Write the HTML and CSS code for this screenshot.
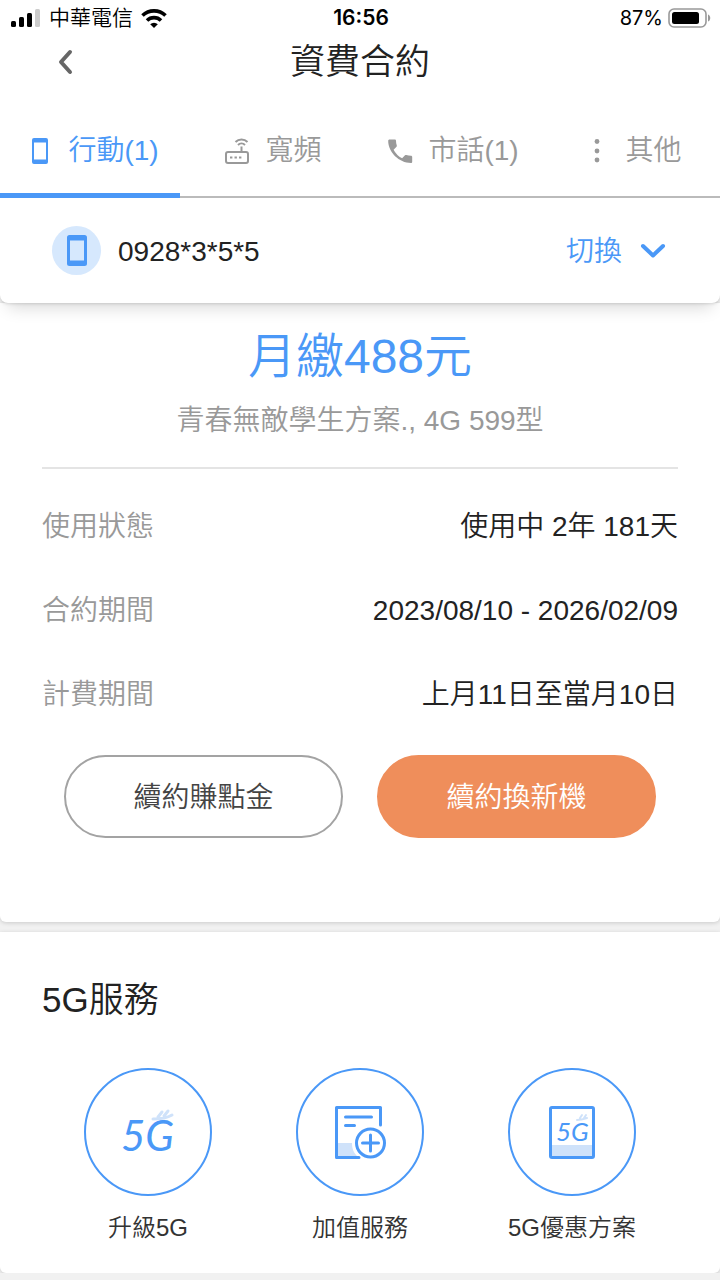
FILE: index.html
```html
<!DOCTYPE html>
<html lang="zh-Hant">

<head>
    <meta charset="UTF-8">
    <meta name="viewport" content="width=device-width, initial-scale=1.0">
    <title>資費合約</title>
    <link rel="stylesheet" href="styles.css">
</head>

<body>
    <header class="top">
        <div class="status-bar">
            <div class="status-left">
                <svg width="30" height="18" viewBox="0 0 30 18">
                    <rect x="0" y="12" width="5" height="6" rx="1.5" />
                    <rect x="8" y="8" width="5" height="10" rx="1.5" />
                    <rect x="16" y="4" width="5" height="14" rx="1.5" />
                    <rect x="24" y="0" width="5" height="18" rx="1.5" fill="#ccc" />
                </svg>
                <span>中華電信</span>
                <svg width="26" height="19" viewBox="0 0 26 19" fill="none" stroke="#000" stroke-width="3.6">
                    <path d="M1.5 6.500a16.500 16.500 0 0 1 23 0" />
                    <path d="M6 11.500a10 10 0 0 1 14 0" />
                    <path d="M13 19l-3.800-3.800a5.400 5.400 0 0 1 7.600 0z" fill="#000" stroke="none" />
                </svg>
            </div>
            <div class="status-time">16:56</div>
            <div class="status-right">
                <span>87%</span>
                <svg width="43" height="20" viewBox="0 0 43 20">
                    <rect x="1" y="1" width="37" height="18" rx="5" fill="none" stroke="#999" stroke-width="1.6" />
                    <rect x="4" y="4" width="27" height="12" rx="2.5" />
                    <path d="M40 6.500c3 1 3 6 0 7z" fill="#999" />
                </svg>
            </div>
        </div>

        <div class="title-bar">
            <button class="back" type="button" aria-label="返回">
                <svg width="16" height="26" viewBox="0 0 16 26" fill="none" stroke="#666" stroke-width="4" stroke-linecap="round" stroke-linejoin="round">
                    <path d="M12 3L3 13l9 10" />
                </svg>
            </button>
            <h1>資費合約</h1>
        </div>

        <nav class="tabs">
            <button class="tab active" type="button">
                <svg class="tab-icon" viewBox="0 0 28 28">
                    <path fill="currentColor" fill-rule="evenodd" d="M8 1h12a2 2 0 0 1 2 2v22a2 2 0 0 1-2 2H8a2 2 0 0 1-2-2V3a2 2 0 0 1 2-2zM8 5.500v17h12v-17z" />
                </svg>
                行動(1)
            </button>
            <button class="tab" type="button">
                <svg class="tab-icon" viewBox="0 0 28 28" fill="none" stroke="currentColor" stroke-width="2">
                    <rect x="3" y="15" width="22" height="11" rx="2" />
                    <path d="M18.500 15V9.500M12.500 5a8.500 8.500 0 0 1 12 0M15 8a5 5 0 0 1 7 0" />
                    <path d="M7 20.500h2.400M11.500 20.500h2.400M16 20.500h2.400" />
                </svg>
                寬頻
            </button>
            <button class="tab" type="button">
                <svg class="tab-icon" viewBox="0 0 28 28">
                    <path fill="currentColor" d="M3.500 2.500h5.200c.7 0 1.300.5 1.300 1.300 0 1.600.3 3.200.8 4.700.1.500 0 1-.3 1.300l-2.900 2.900a19.500 19.500 0 0 0 8.500 8.500l2.900-2.900c.4-.3.900-.4 1.300-.3 1.500.5 3.100.8 4.700.8.700 0 1.200.6 1.200 1.300v4.600c0 .7-.5 1.300-1.200 1.300C13 26 2.200 15.200 2.200 3.800c0-.7.600-1.300 1.300-1.300z" />
                </svg>
                市話(1)
            </button>
            <button class="tab" type="button">
                <svg class="tab-icon" viewBox="0 0 28 28" fill="currentColor">
                    <circle cx="14" cy="4.5" r="2.4" />
                    <circle cx="14" cy="14" r="2.4" />
                    <circle cx="14" cy="23" r="2.4" />
                </svg>
                其他
            </button>
        </nav>

        <div class="number-bar">
            <span class="phone-badge">
                <svg width="20" height="32" viewBox="0 0 20 32">
                    <path fill="#4a98f7" fill-rule="evenodd" d="M2.500 0h15A2.500 2.500 0 0 1 20 2.500v26a2.500 2.500 0 0 1-2.500 2.500h-15A2.500 2.500 0 0 1 0 28.500v-26A2.500 2.500 0 0 1 2.500 0zM3 5.500v20h14v-20z" />
                </svg>
            </span>
            <span class="number">0928*3*5*5</span>
            <button class="switch" type="button">
                切換
                <svg width="26" height="18" viewBox="0 0 26 18" fill="none" stroke="currentColor" stroke-width="4" stroke-linecap="round" stroke-linejoin="round">
                    <path d="M3 3l10 9.500L23 3" />
                </svg>
            </button>
        </div>
    </header>

    <main>
        <section class="card plan">
            <h2 class="price">月繳488元</h2>
            <p class="plan-name">青春無敵學生方案., 4G 599型</p>
            <dl class="details">
                <div class="row">
                    <dt>使用狀態</dt>
                    <dd>使用中 2年 181天</dd>
                </div>
                <div class="row">
                    <dt>合約期間</dt>
                    <dd>2023/08/10 - 2026/02/09</dd>
                </div>
                <div class="row">
                    <dt>計費期間</dt>
                    <dd>上月11日至當月10日</dd>
                </div>
            </dl>
            <div class="actions">
                <button class="btn" type="button">續約賺點金</button>
                <button class="btn btn-primary" type="button">續約換新機</button>
            </div>
        </section>

        <section class="card services">
            <h2>5G服務</h2>
            <div class="service-list">
                <a class="service" href="#">
                    <span class="circle">
                        <svg width="56" height="56" viewBox="0 0 56 56">
                            <text class="logo-text" x="1" y="47" font-size="42">5G</text>
                            <path d="M33 15c7 0 14-1 19-4M38 13l4-5M44 12l4-5" fill="none" stroke="#cfe2fa" stroke-width="3" stroke-linecap="round" />
                        </svg>
                    </span>
                    升級5G
                </a>
                <a class="service" href="#">
                    <span class="circle">
                        <svg width="56" height="56" viewBox="0 0 56 56" fill="none" stroke="#4a98f7" stroke-width="3" stroke-linecap="round" stroke-linejoin="round">
                            <path d="M6 39h14c0 6 2 10 5 13H6z" fill="#cfe2fa" stroke="none" />
                            <path d="M48.500 21V3.500h-44v50H27" />
                            <path d="M13.500 13h26M13.500 21.500h9" />
                            <circle cx="38.5" cy="39" r="14" />
                            <path d="M38.500 31v16M30.500 39h16" />
                        </svg>
                    </span>
                    加值服務
                </a>
                <a class="service" href="#">
                    <span class="circle">
                        <svg width="56" height="56" viewBox="0 0 56 56">
                            <rect x="7" y="41" width="42" height="12" fill="#cfe2fa" />
                            <rect x="6.500" y="3.500" width="43" height="50" rx="1.5" fill="none" stroke="#4a98f7" stroke-width="3" />
                            <text class="logo-text" x="12" y="37" font-size="26">5G</text>
                            <path d="M33 16c4 0 7-1 10-2M36 14l2-3M40 14l2-3" fill="none" stroke="#cfe2fa" stroke-width="2" stroke-linecap="round" />
                        </svg>
                    </span>
                    5G優惠方案
                </a>
            </div>
        </section>
    </main>
</body>

</html>
```
FILE: styles.css
```css
* {
    box-sizing: border-box;
}

body {
    margin: 0;
    background: #f1f1f1;
    color: #222;
    font-family: "Liberation Sans", "Noto Sans CJK TC", sans-serif;
    font-size: 28px;
    font-weight: 350;
    line-height: 40px;
}

h1,
h2,
p,
dl,
dd {
    margin: 0;
    font-weight: 350;
}

button {
    padding: 0;
    border: none;
    background: none;
    color: inherit;
    font: inherit;
    cursor: pointer;
}

svg {
    display: block;
    flex: none;
}

.top {
    position: relative;
    background: #fff;
    border-radius: 0 0 8px 8px;
    box-shadow: 0 1px 3px rgba(0, 0, 0, 0.12), 0 12px 16px -8px rgba(0, 0, 0, 0.16);
}

/* status bar */
.status-bar {
    display: grid;
    grid-template-columns: 1fr auto 1fr;
    align-items: center;
    height: 36px;
    padding: 0 9px 0 11px;
    color: #000;
    font-family: Inter, "Noto Sans CJK TC", sans-serif;
    font-size: 21px;
    line-height: 34px;
}

.status-left,
.status-right {
    display: flex;
    align-items: center;
    gap: 8px;
}

.status-right {
    justify-content: flex-end;
    gap: 5px;
    font-size: 20px;
    font-weight: 400;
}

.status-time {
    font-weight: 600;
}

/* title */
.title-bar {
    display: grid;
    grid-template-columns: 1fr auto 1fr;
    align-items: center;
    height: 52px;
    padding: 0 58px;
}

.back {
    justify-self: start;
}

.title-bar h1 {
    font-size: 35px;
}

/* tabs */
.tabs {
    display: grid;
    grid-template-columns: repeat(4, 1fr);
    height: 110px;
    border-bottom: 2px solid #bbb;
}

.tab {
    display: flex;
    align-items: center;
    justify-content: center;
    gap: 14px;
    margin-bottom: -2px;
    padding: 20px 0 0 5px;
    border-bottom: 5px solid transparent;
    color: #999;
}

.tab-icon {
    width: 28px;
    height: 28px;
}

.tab.active {
    color: #4a98f7;
    border-bottom-color: #4a98f7;
}

/* current number */
.number-bar {
    display: flex;
    align-items: center;
    height: 105px;
    padding: 0 54px 0 52px;
}

.phone-badge {
    display: flex;
    align-items: center;
    justify-content: center;
    width: 49px;
    height: 49px;
    margin-right: 17px;
    border-radius: 50%;
    background: #d6e8fd;
}

.number {
    padding-top: 2px;
}

.switch {
    display: flex;
    align-items: center;
    gap: 18px;
    margin-left: auto;
    padding-top: 2px;
    color: #4a98f7;
}

/* cards */
.card {
    padding: 0 42px;
    background: #fff;
    border-radius: 0 0 6px 6px;
    box-shadow: 0 1px 4px rgba(0, 0, 0, 0.16);
}

.plan {
    padding-top: 23px;
    padding-bottom: 84px;
    text-align: center;
}

.price {
    color: #4a98f7;
    font-size: 48px;
    line-height: 62px;
}

.plan-name {
    padding: 13px 0 26px;
    border-bottom: 2px solid #e4e4e4;
    color: #999;
}

.details {
    padding: 16px 0 18px;
}

.row {
    display: flex;
    align-items: center;
    justify-content: space-between;
    height: 84px;
}

.row dt {
    color: #999;
}

.actions {
    display: flex;
    gap: 34px;
    padding: 0 22px;
}

.btn {
    flex: 1;
    height: 83px;
    padding-top: 2px;
    border: 2px solid #a3a3a3;
    border-radius: 42px;
    color: #444;
}

.btn-primary {
    border-color: #ef8e5b;
    background: #ef8e5b;
    color: #fff;
}

/* 5G services */
.services {
    margin-top: 10px;
    padding-top: 48px;
    padding-bottom: 25px;
}

.services h2 {
    font-size: 35px;
}

.service-list {
    display: grid;
    grid-template-columns: repeat(3, 1fr);
    margin-top: 48px;
}

.service {
    display: flex;
    flex-direction: column;
    align-items: center;
    gap: 12px;
    color: #333;
    font-size: 24px;
    text-decoration: none;
}

.circle {
    display: flex;
    align-items: center;
    justify-content: center;
    width: 128px;
    height: 128px;
    border: 2px solid #4a98f7;
    border-radius: 50%;
}

.logo-text {
    fill: #4a98f7;
    font-family: Lato, sans-serif;
    font-style: italic;
    font-weight: 400;
}
```
